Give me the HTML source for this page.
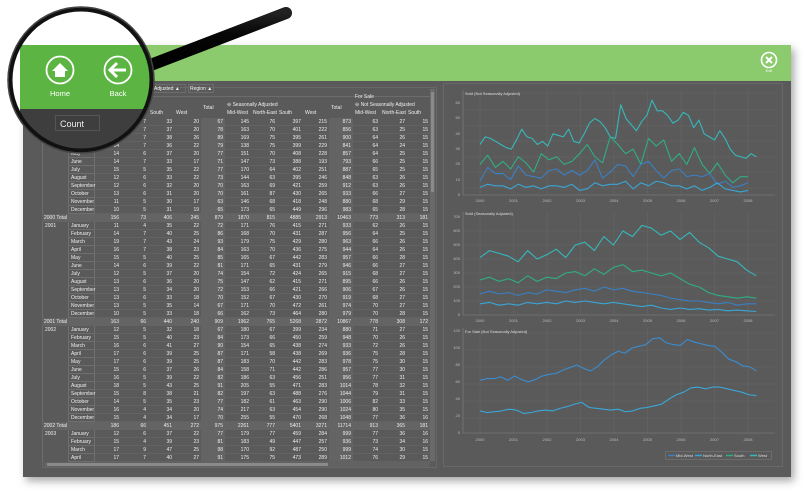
<!DOCTYPE html>
<html><head><meta charset="utf-8">
<style>
*{margin:0;padding:0;box-sizing:border-box}
body{width:806px;height:492px;background:#fff;position:relative;overflow:hidden;font-family:"Liberation Sans",sans-serif}
#win{position:absolute;left:23px;top:45px;width:768px;height:432px;background:#5a5a5a;box-shadow:3px 4px 8px rgba(0,0,0,.35)}
#bar{position:absolute;left:23px;top:45px;width:768px;height:36px;background:#8ccb6d}
.tp{position:absolute;left:42px;top:87px;width:395px;height:381px;border:1px solid #686868}
.rows{position:absolute;left:42px;top:118px;width:388px}
.r{display:flex;height:8px;font-size:5px;line-height:8px;color:#eee}
.r span{text-align:right;padding-right:2px;border-bottom:1px solid #626262}
.r span:nth-child(1){width:26px;text-align:left;padding-left:2px;border-left:1px solid #6e6e6e;border-bottom:none}
.r span:nth-child(2){width:27px;text-align:left;padding-left:2px;border:1px solid #6e6e6e;border-top:none}
.r span:nth-child(3){width:26px}.r span:nth-child(4){width:27px}.r span:nth-child(5){width:26px}.r span:nth-child(6){width:27px}
.r span:nth-child(7){width:24px;background:#646464}
.r span:nth-child(8),.r span:nth-child(9),.r span:nth-child(10),.r span:nth-child(11){width:26px}
.r span:nth-child(12){width:24px;background:#646464}
.r span:nth-child(13),.r span:nth-child(14){width:27px}.r span:nth-child(15){width:23px}
.r.t{background:#646464}.r.t span{border-bottom:none}
.r.t span:nth-child(1){width:53px;border:none}
.r.t span:nth-child(2){display:none}
.h{position:absolute;font-size:5px;color:#eee;white-space:nowrap}
.hb{position:absolute;border:1px solid #6c6c6c}
</style></head><body>
<div id="win"></div>
<div id="bar"></div>
<!-- exit -->
<svg style="position:absolute;left:760px;top:51px" width="20" height="24"><circle cx="9" cy="9" r="7.5" fill="none" stroke="#fff" stroke-width="1.6"/><path d="M6 6L12 12M12 6L6 12" stroke="#fff" stroke-width="2"/><text x="9" y="21" font-size="4" fill="#fff" text-anchor="middle" font-family="Liberation Sans">Exit</text></svg>

<div class="tp"></div>
<div class="hb" style="left:150px;top:84px;width:36px;height:9px"></div>
<div class="hb" style="left:188px;top:84px;width:26px;height:9px"></div>
<div class="h" style="left:154px;top:86px">Adjusted ▲</div>
<div class="h" style="left:190px;top:86px">Region ▲</div>
<div class="hb" style="left:42px;top:96px;width:388px;height:22px;border-width:1px 0 0 0"></div>
<div class="h" style="left:355px;top:94px">For Sale</div>
<div class="h" style="left:203px;top:105px">Total</div>
<div class="h" style="left:227px;top:102px">⊖ Seasonally Adjusted</div>
<div class="h" style="left:331px;top:105px">Total</div>
<div class="h" style="left:355px;top:102px">⊖ Not Seasonally Adjusted</div>
<div class="h" style="left:150px;top:110px">South</div><div class="h" style="left:176px;top:110px">West</div>
<div class="h" style="left:227px;top:110px">Mid-West</div><div class="h" style="left:253px;top:110px">North-East</div><div class="h" style="left:279px;top:110px">South</div><div class="h" style="left:305px;top:110px">West</div>
<div class="h" style="left:355px;top:110px">Mid-West</div><div class="h" style="left:382px;top:110px">North-East</div><div class="h" style="left:408px;top:110px">South</div>

<div class="rows">
<div class="r"><span>2000</span><span>January</span><span>14</span><span>7</span><span>33</span><span>20</span><span>67</span><span>145</span><span>76</span><span>397</span><span>215</span><span>873</span><span>63</span><span>27</span><span>15</span></div>
<div class="r"><span></span><span>February</span><span>13</span><span>7</span><span>37</span><span>20</span><span>78</span><span>163</span><span>70</span><span>401</span><span>222</span><span>856</span><span>63</span><span>25</span><span>15</span></div>
<div class="r"><span></span><span>March</span><span>13</span><span>7</span><span>38</span><span>26</span><span>89</span><span>169</span><span>75</span><span>395</span><span>261</span><span>900</span><span>64</span><span>26</span><span>15</span></div>
<div class="r"><span></span><span>April</span><span>14</span><span>7</span><span>36</span><span>22</span><span>79</span><span>138</span><span>75</span><span>399</span><span>229</span><span>841</span><span>64</span><span>24</span><span>15</span></div>
<div class="r"><span></span><span>May</span><span>14</span><span>6</span><span>37</span><span>20</span><span>77</span><span>151</span><span>70</span><span>408</span><span>228</span><span>857</span><span>64</span><span>25</span><span>15</span></div>
<div class="r"><span></span><span>June</span><span>14</span><span>7</span><span>33</span><span>17</span><span>71</span><span>147</span><span>73</span><span>388</span><span>193</span><span>793</span><span>66</span><span>25</span><span>15</span></div>
<div class="r"><span></span><span>July</span><span>15</span><span>5</span><span>35</span><span>22</span><span>77</span><span>170</span><span>64</span><span>402</span><span>251</span><span>887</span><span>65</span><span>25</span><span>15</span></div>
<div class="r"><span></span><span>August</span><span>12</span><span>6</span><span>33</span><span>22</span><span>73</span><span>144</span><span>63</span><span>395</span><span>246</span><span>848</span><span>63</span><span>26</span><span>15</span></div>
<div class="r"><span></span><span>September</span><span>12</span><span>6</span><span>32</span><span>20</span><span>70</span><span>163</span><span>69</span><span>421</span><span>259</span><span>912</span><span>63</span><span>26</span><span>15</span></div>
<div class="r"><span></span><span>October</span><span>13</span><span>6</span><span>31</span><span>20</span><span>70</span><span>161</span><span>87</span><span>430</span><span>265</span><span>933</span><span>66</span><span>27</span><span>15</span></div>
<div class="r"><span></span><span>November</span><span>11</span><span>5</span><span>30</span><span>17</span><span>63</span><span>146</span><span>68</span><span>418</span><span>248</span><span>880</span><span>68</span><span>29</span><span>15</span></div>
<div class="r"><span></span><span>December</span><span>10</span><span>5</span><span>31</span><span>19</span><span>65</span><span>173</span><span>65</span><span>449</span><span>296</span><span>983</span><span>65</span><span>28</span><span>15</span></div>
<div class="r t"><span>2000 Total</span><span></span><span>156</span><span>73</span><span>406</span><span>245</span><span>879</span><span>1870</span><span>815</span><span>4885</span><span>2913</span><span>10463</span><span>773</span><span>313</span><span>181</span></div>
<div class="r"><span>2001</span><span>January</span><span>11</span><span>4</span><span>35</span><span>22</span><span>72</span><span>171</span><span>76</span><span>415</span><span>271</span><span>933</span><span>62</span><span>26</span><span>15</span></div>
<div class="r"><span></span><span>February</span><span>14</span><span>7</span><span>40</span><span>25</span><span>86</span><span>168</span><span>70</span><span>431</span><span>287</span><span>956</span><span>64</span><span>25</span><span>15</span></div>
<div class="r"><span></span><span>March</span><span>19</span><span>7</span><span>43</span><span>24</span><span>93</span><span>179</span><span>75</span><span>429</span><span>280</span><span>963</span><span>66</span><span>26</span><span>15</span></div>
<div class="r"><span></span><span>April</span><span>16</span><span>7</span><span>38</span><span>23</span><span>84</span><span>163</span><span>70</span><span>436</span><span>275</span><span>944</span><span>64</span><span>26</span><span>15</span></div>
<div class="r"><span></span><span>May</span><span>15</span><span>5</span><span>40</span><span>25</span><span>85</span><span>165</span><span>67</span><span>442</span><span>283</span><span>957</span><span>66</span><span>28</span><span>15</span></div>
<div class="r"><span></span><span>June</span><span>14</span><span>6</span><span>39</span><span>22</span><span>81</span><span>171</span><span>65</span><span>431</span><span>279</span><span>946</span><span>66</span><span>27</span><span>15</span></div>
<div class="r"><span></span><span>July</span><span>12</span><span>5</span><span>37</span><span>20</span><span>74</span><span>154</span><span>72</span><span>424</span><span>265</span><span>915</span><span>68</span><span>27</span><span>15</span></div>
<div class="r"><span></span><span>August</span><span>13</span><span>6</span><span>36</span><span>20</span><span>75</span><span>147</span><span>62</span><span>415</span><span>271</span><span>895</span><span>66</span><span>26</span><span>15</span></div>
<div class="r"><span></span><span>September</span><span>13</span><span>5</span><span>34</span><span>20</span><span>72</span><span>153</span><span>66</span><span>421</span><span>266</span><span>906</span><span>67</span><span>26</span><span>15</span></div>
<div class="r"><span></span><span>October</span><span>13</span><span>6</span><span>33</span><span>18</span><span>70</span><span>152</span><span>67</span><span>430</span><span>270</span><span>919</span><span>68</span><span>27</span><span>15</span></div>
<div class="r"><span></span><span>November</span><span>13</span><span>5</span><span>35</span><span>14</span><span>67</span><span>171</span><span>70</span><span>472</span><span>261</span><span>974</span><span>70</span><span>27</span><span>15</span></div>
<div class="r"><span></span><span>December</span><span>10</span><span>5</span><span>33</span><span>18</span><span>66</span><span>162</span><span>73</span><span>464</span><span>280</span><span>979</span><span>70</span><span>28</span><span>15</span></div>
<div class="r t"><span>2001 Total</span><span></span><span>163</span><span>66</span><span>440</span><span>240</span><span>909</span><span>1962</span><span>765</span><span>5268</span><span>2872</span><span>10867</span><span>778</span><span>308</span><span>172</span></div>
<div class="r"><span>2002</span><span>January</span><span>12</span><span>5</span><span>32</span><span>18</span><span>67</span><span>180</span><span>67</span><span>399</span><span>234</span><span>880</span><span>71</span><span>27</span><span>15</span></div>
<div class="r"><span></span><span>February</span><span>15</span><span>5</span><span>40</span><span>23</span><span>84</span><span>173</span><span>66</span><span>450</span><span>259</span><span>948</span><span>70</span><span>26</span><span>15</span></div>
<div class="r"><span></span><span>March</span><span>16</span><span>6</span><span>41</span><span>27</span><span>90</span><span>154</span><span>65</span><span>438</span><span>274</span><span>933</span><span>72</span><span>26</span><span>15</span></div>
<div class="r"><span></span><span>April</span><span>17</span><span>6</span><span>39</span><span>25</span><span>87</span><span>171</span><span>58</span><span>438</span><span>269</span><span>936</span><span>75</span><span>28</span><span>15</span></div>
<div class="r"><span></span><span>May</span><span>17</span><span>6</span><span>39</span><span>25</span><span>87</span><span>183</span><span>70</span><span>442</span><span>283</span><span>978</span><span>75</span><span>30</span><span>15</span></div>
<div class="r"><span></span><span>June</span><span>15</span><span>6</span><span>37</span><span>26</span><span>84</span><span>158</span><span>71</span><span>442</span><span>286</span><span>957</span><span>77</span><span>30</span><span>15</span></div>
<div class="r"><span></span><span>July</span><span>16</span><span>5</span><span>39</span><span>22</span><span>82</span><span>186</span><span>63</span><span>456</span><span>251</span><span>956</span><span>77</span><span>31</span><span>15</span></div>
<div class="r"><span></span><span>August</span><span>18</span><span>5</span><span>43</span><span>25</span><span>91</span><span>205</span><span>55</span><span>471</span><span>283</span><span>1014</span><span>78</span><span>32</span><span>15</span></div>
<div class="r"><span></span><span>September</span><span>15</span><span>8</span><span>38</span><span>21</span><span>82</span><span>197</span><span>63</span><span>488</span><span>276</span><span>1044</span><span>79</span><span>31</span><span>15</span></div>
<div class="r"><span></span><span>October</span><span>14</span><span>5</span><span>35</span><span>23</span><span>77</span><span>182</span><span>61</span><span>463</span><span>290</span><span>1006</span><span>82</span><span>33</span><span>15</span></div>
<div class="r"><span></span><span>November</span><span>16</span><span>4</span><span>34</span><span>20</span><span>74</span><span>217</span><span>63</span><span>454</span><span>290</span><span>1024</span><span>80</span><span>35</span><span>15</span></div>
<div class="r"><span></span><span>December</span><span>15</span><span>4</span><span>34</span><span>17</span><span>70</span><span>255</span><span>55</span><span>470</span><span>268</span><span>1048</span><span>77</span><span>36</span><span>16</span></div>
<div class="r t"><span>2002 Total</span><span></span><span>186</span><span>66</span><span>451</span><span>272</span><span>975</span><span>2261</span><span>777</span><span>5401</span><span>3271</span><span>11714</span><span>913</span><span>365</span><span>181</span></div>
<div class="r"><span>2003</span><span>January</span><span>12</span><span>6</span><span>37</span><span>22</span><span>77</span><span>179</span><span>77</span><span>459</span><span>284</span><span>999</span><span>77</span><span>36</span><span>16</span></div>
<div class="r"><span></span><span>February</span><span>15</span><span>4</span><span>39</span><span>23</span><span>81</span><span>183</span><span>49</span><span>447</span><span>257</span><span>936</span><span>73</span><span>34</span><span>16</span></div>
<div class="r"><span></span><span>March</span><span>17</span><span>9</span><span>47</span><span>25</span><span>98</span><span>170</span><span>92</span><span>487</span><span>250</span><span>999</span><span>74</span><span>30</span><span>15</span></div>
<div class="r"><span></span><span>April</span><span>17</span><span>7</span><span>40</span><span>27</span><span>91</span><span>175</span><span>75</span><span>473</span><span>289</span><span>1012</span><span>76</span><span>29</span><span>15</span></div>
</div>
<!-- scrollbars -->
<div style="position:absolute;left:430px;top:89px;width:5px;height:372px;background:#6a6a6a"></div>
<div style="position:absolute;left:431px;top:92px;width:3px;height:100px;background:#8a8a8a"></div>
<div style="position:absolute;left:44px;top:462px;width:386px;height:5px;background:#626262"></div>
<div style="position:absolute;left:47px;top:463px;width:281px;height:3px;background:#8a8a8a"></div>

<!-- charts -->
<svg style="position:absolute;left:0;top:0" width="806" height="492" font-family="Liberation Sans">
<rect x="443.5" y="83.5" width="339" height="383" fill="none" stroke="#686868"/>
<g stroke="#666" stroke-width="0.6">
<path d="M463 93H775M463 110H775M463 126H775M463 141H775M463 157H775M463 172H775M463 188H775"/>
<path d="M463 231H775M463 245H775M463 259H775M463 273H775M463 287H775M463 301H775"/>
<path d="M463 333H775M463 350H775M463 367H775M463 384H775M463 401H775M463 418H775"/>
<path d="M480 90V195M513.5 90V195M547 90V195M580.5 90V195M614 90V195M647.5 90V195M681 90V195M714.5 90V195M748 90V195"/>
<path d="M480 212V315M513.5 212V315M547 212V315M580.5 212V315M614 212V315M647.5 212V315M681 212V315M714.5 212V315M748 212V315"/>
<path d="M480 328V433M513.5 328V433M547 328V433M580.5 328V433M614 328V433M647.5 328V433M681 328V433M714.5 328V433M748 328V433"/>
</g>
<g stroke="#777" stroke-width="0.8" fill="none"><path d="M463 90V195H775M463 212V315H775M463 328V433H775"/></g>
<g font-size="4" fill="#ddd">
<text x="465" y="95">Sold (Not Seasonally Adjusted)</text>
<text x="465" y="215">Sold (Seasonally Adjusted)</text>
<text x="465" y="333">For Sale (Not Seasonally Adjusted)</text>
</g>
<g font-size="4" fill="#bbb" text-anchor="end">
<text x="460" y="196">0</text><text x="460" y="181">10</text><text x="460" y="165">20</text><text x="460" y="150">30</text><text x="460" y="135">40</text><text x="460" y="119">50</text><text x="460" y="104">60</text>
<text x="460" y="316">0</text><text x="460" y="302">100</text><text x="460" y="288">200</text><text x="460" y="274">300</text><text x="460" y="260">400</text><text x="460" y="246">500</text><text x="460" y="232">600</text><text x="460" y="218">700</text>
<text x="460" y="434">0</text><text x="460" y="417">20</text><text x="460" y="400">40</text><text x="460" y="383">60</text><text x="460" y="366">80</text><text x="460" y="349">100</text><text x="460" y="332">120</text>
</g>
<g font-size="4" fill="#bbb" text-anchor="middle">
<text x="480" y="202">2000</text><text x="513.5" y="202">2001</text><text x="547" y="202">2002</text><text x="580.5" y="202">2003</text><text x="614" y="202">2004</text><text x="647.5" y="202">2005</text><text x="681" y="202">2006</text><text x="714.5" y="202">2007</text><text x="748" y="202">2008</text>
<text x="480" y="322">2000</text><text x="513.5" y="322">2001</text><text x="547" y="322">2002</text><text x="580.5" y="322">2003</text><text x="614" y="322">2004</text><text x="647.5" y="322">2005</text><text x="681" y="322">2006</text><text x="714.5" y="322">2007</text><text x="748" y="322">2008</text>
<text x="480" y="441">2000</text><text x="513.5" y="441">2001</text><text x="547" y="441">2002</text><text x="580.5" y="441">2003</text><text x="614" y="441">2004</text><text x="647.5" y="441">2005</text><text x="681" y="441">2006</text><text x="714.5" y="441">2007</text><text x="748" y="441">2008</text>
</g>
<g fill="none" stroke-width="1.1" stroke-linejoin="round">
<!-- chart1 -->
<g transform="translate(480,195) scale(5.213,-1.53)">
<polyline vector-effect="non-scaling-stroke" stroke="#36b8bb" points="0,33 1,38 2,37 3,35 4,33 5,31 6,30 7,36 8,43 9,38 10,37 11,33 12,35 13,32 14,40 15,39 16,38 17,43 18,35 19,34 20,40 21,47 22,50 23,48 24,44 25,38 26,37 27,59 28,50 29,46 30,42 31,48 32,52 33,62 34,55 35,55 36,52 37,47 38,49 39,54 40,52 41,44 42,49 43,40 44,38 45,36 46,42 47,37 48,30 49,26 50,25 51,24 52,27 53,25"/>
</g>
<g transform="translate(480,195) scale(7.659,-1.53)">
<polyline vector-effect="non-scaling-stroke" stroke="#2fae86" points="0,20 1,26 2,18 3,22 4,17 5,25 6,21 7,15 8,27 9,23 10,25 11,20 12,22 13,27 14,33 15,25 16,21 17,38 18,33 19,27 20,30 21,20 22,37 23,32 24,36 25,22 26,27 27,20 28,31 29,20 30,14 31,21 32,13 33,8 34,12 35,12"/>
<polyline vector-effect="non-scaling-stroke" stroke="#3a80c4" points="0,9 1,18 2,14 3,14 4,10 5,19 6,13 7,12 8,11 9,16 10,17 11,13 12,16 13,13 14,16 15,23 16,11 17,15 18,20 19,19 20,12 21,20 22,22 23,16 24,11 25,16 26,17 27,12 28,13 29,12 30,14 31,7 32,9 33,5 34,6 35,8"/>
<polyline vector-effect="non-scaling-stroke" stroke="#3aa6d6" points="0,5 1,7 2,6 3,6 4,4 5,7 6,5 7,6 8,4 9,6 10,6 11,5 12,7 13,3 14,4 15,8 16,6 17,7 18,7 19,9 20,4 21,8 22,6 23,9 24,8 25,6 26,6 27,4 28,6 29,3 30,5 31,8 32,4 33,3 34,2 35,3"/>
</g>
<!-- chart2 -->
<g transform="translate(480,315) scale(9.527,-0.14)">
<polyline vector-effect="non-scaling-stroke" stroke="#36b8bb" points="0,410 1,460 2,440 3,420 4,380 5,460 6,400 7,430 8,470 9,410 10,500 11,520 12,460 13,560 14,500 15,600 16,560 17,640 18,620 19,570 20,600 21,540 22,590 23,520 24,480 25,420 26,400 27,380 28,320 29,280"/>
<polyline vector-effect="non-scaling-stroke" stroke="#2fae86" points="0,250 1,270 2,240 3,260 4,230 5,280 6,240 7,270 8,260 9,300 10,310 11,280 12,330 13,290 14,340 15,360 16,310 17,320 18,300 19,280 20,300 21,260 22,220 23,200 24,160 25,140 26,130 27,120 28,130 29,120"/>
<polyline vector-effect="non-scaling-stroke" stroke="#3a80c4" points="0,150 1,170 2,150 3,160 4,140 5,160 6,150 7,180 8,170 9,160 10,180 11,190 12,170 13,200 14,180 15,190 16,170 17,160 18,150 19,140 20,120 21,110 22,100 23,100 24,90 25,80 26,90 27,70 28,80 29,80"/>
<polyline vector-effect="non-scaling-stroke" stroke="#3aa6d6" points="0,80 1,90 2,70 3,80 4,70 5,90 6,80 7,90 8,80 9,100 10,90 11,100 12,90 13,80 14,90 15,80 16,70 17,60 18,70 19,50 20,40 21,50 22,40 23,45 24,35 25,40 26,30 27,35 28,30 29,25"/>
</g>
<!-- chart3 -->
<g transform="translate(480,433) scale(6.909,-0.85)">
<polyline vector-effect="non-scaling-stroke" stroke="#3a8dd0" points="0,62 1,64 2,64 3,66 4,62 5,67 6,63 7,60 8,63 9,67 10,69 11,70 12,74 13,77 14,80 15,76 16,73 17,78 18,86 19,92 20,96 21,94 22,100 23,102 24,104 25,111 26,112 27,106 28,104 29,103 30,110 31,107 32,105 33,103 34,102 35,95 36,87 37,84 38,79 39,78 40,73"/>
</g>
<g transform="translate(480,433) scale(7.27,-0.85)">
<polyline vector-effect="non-scaling-stroke" stroke="#3aa8d8" points="0,26 1,24 2,25 3,26 4,28 5,27 6,23 7,24 8,26 9,27 10,26 11,29 12,31 13,34 14,36 15,30 16,29 17,28 18,27 19,28 20,25 21,26 22,29 23,30 24,32 25,34 26,40 27,45 28,48 29,53 30,54 31,52 32,54 33,54 34,52 35,50 36,48 37,45 38,44"/>
</g>
</g>
<!-- legend -->
<rect x="665.5" y="451.5" width="106" height="8" fill="none" stroke="#6c6c6c"/>
<g stroke-width="1.5"><path d="M668 455.5H675" stroke="#3a80c4"/><path d="M695 455.5H702" stroke="#3aa6d6"/><path d="M726 455.5H733" stroke="#2fae86"/><path d="M750 455.5H757" stroke="#36b8bb"/></g>
<g font-size="4" fill="#ddd"><text x="676" y="457">Mid-West</text><text x="703" y="457">North-East</text><text x="734" y="457">South</text><text x="758" y="457">West</text></g>
</svg>

<!-- magnifier -->
<svg style="position:absolute;left:0;top:0" width="806" height="492" font-family="Liberation Sans">
<defs><clipPath id="c"><circle cx="81" cy="80" r="69"/></clipPath>
<linearGradient id="hg" x1="0" y1="0" x2="0" y2="1"><stop offset="0" stop-color="#555"/><stop offset=".4" stop-color="#111"/><stop offset="1" stop-color="#000"/></linearGradient></defs>
<path d="M148 66L286 13" stroke="url(#hg)" stroke-width="12" stroke-linecap="round"/>
<path d="M148 66L286 13" stroke="#000" stroke-width="12" stroke-linecap="round" opacity=".6"/>
<g clip-path="url(#c)">
<rect x="0" y="0" width="200" height="200" fill="#fff"/>
<rect x="20" y="45" width="180" height="64" fill="#5cb542"/>
<rect x="20" y="109" width="180" height="100" fill="#3e3e3e"/>
<rect x="145" y="109" width="60" height="100" fill="#5a5a5a"/>
<rect x="55.5" y="115.5" width="44" height="15" fill="none" stroke="#555"/>
<text x="60" y="127" font-size="9" fill="#eee">Count</text>
<circle cx="60" cy="70" r="13.5" fill="none" stroke="#fff" stroke-width="1.8"/>
<path d="M52 71L60 63L68 71H65V77H55V71Z" fill="#fff"/>
<text x="60" y="96" font-size="7.5" fill="#fff" text-anchor="middle">Home</text>
<circle cx="118" cy="70" r="13.5" fill="none" stroke="#fff" stroke-width="1.8"/>
<path d="M126 70H111M117 63L110 70L117 77" fill="none" stroke="#fff" stroke-width="3"/>
<text x="118" y="96" font-size="7.5" fill="#fff" text-anchor="middle">Back</text>
</g>
<circle cx="81" cy="80" r="70.5" fill="none" stroke="#111" stroke-width="4"/>
<circle cx="81" cy="80" r="73" fill="none" stroke="#444" stroke-width="1.5"/>
</svg>
</body></html>
